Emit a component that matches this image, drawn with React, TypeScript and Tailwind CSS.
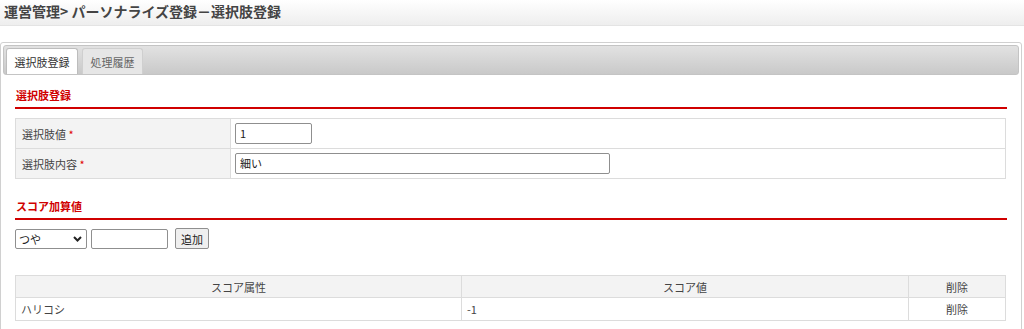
import React from "react";

const font = { fontFamily: '"Noto Sans CJK JP", "Noto Sans", sans-serif' };

function SectionTitle({ children }: { children: React.ReactNode }) {
  return (
    <div className="mx-[12px] h-[34px] border-b-2 border-[#d00000] pt-[12px] pl-[1px] text-[11px] leading-[16px]">
      <span className="font-bold text-[#d00000]">{children}</span>
    </div>
  );
}

export default function App() {
  const rows = [
    { label: "選択肢値", value: "1", w: "w-[77px]" },
    { label: "選択肢内容", value: "細い", w: "w-[375px]" },
  ];

  return (
    <div className="w-[1024px] h-[329px] overflow-hidden bg-white text-[#444]" style={font}>
      {/* Header */}
      <div className="h-[26px] border-b border-[#e4e4e4] bg-gradient-to-b from-white to-[#eeeeee] px-[4px] pt-[1px]">
        <h1 className="text-[14px] font-bold leading-[20px] text-[#444]">運営管理&gt; パーソナライズ登録－選択肢登録</h1>
      </div>

      {/* Panel */}
      <div className="mt-[16px] mr-[2px] rounded-t-[3px] border border-[#d0d0d0] p-[2px] pb-[20px] text-[11px] leading-[16px]">
        {/* Tabs */}
        <div className="flex h-[30px] items-end gap-[4px] rounded-[3px] border border-[#c4c4c4] bg-gradient-to-b from-[#e2e2e2] to-[#c9c9c9] pl-[2px]">
          <div className="flex h-[26px] w-[72px] items-center justify-center rounded-t-[3px] border border-b-0 border-[#bdbdbd] bg-white text-[#333]">
            選択肢登録
          </div>
          <div className="flex h-[26px] w-[61px] items-center justify-center rounded-t-[3px] border border-b-0 border-[#cfcfcf] bg-[#e6e6e6] text-[#666]">
            処理履歴
          </div>
        </div>

        <SectionTitle>選択肢登録</SectionTitle>

        <table className="mx-[12px] mt-[9px] w-[991px] border-collapse">
          <tbody>
            {rows.map((r) => (
              <tr key={r.label} className="h-[30px]">
                <td className="w-[215px] border border-[#dcdcdc] bg-[#f3f3f3] px-[6px]">
                  {r.label} <span className="text-[#e00000]">*</span>
                </td>
                <td className="border border-[#dcdcdc] px-[4px]">
                  <div className={`${r.w} h-[21px] rounded-[2px] border border-[#8f8f8f] bg-white px-[4px] leading-[19px] text-[#222]`}>
                    {r.value}
                  </div>
                </td>
              </tr>
            ))}
          </tbody>
        </table>

        <div className="mt-[7px]">
          <SectionTitle>スコア加算値</SectionTitle>
        </div>

        <div className="mx-[12px] mt-[8px] flex h-[21px] items-center gap-[4px]">
          <div className="flex h-[20px] w-[72px] items-center justify-between rounded-[2px] border border-[#8f8f8f] bg-white pl-[3px] pr-[4px] text-[#222]">
            <span>つや</span>
            <svg width="9" height="6" viewBox="0 0 9 6">
              <path d="M1 1l3.5 3.5L8 1" fill="none" stroke="#222" strokeWidth="2" />
            </svg>
          </div>
          <div className="h-[20px] w-[77px] rounded-[2px] border border-[#8f8f8f] bg-white" />
          <div className="ml-[3px] flex h-[21px] w-[34px] items-center justify-center rounded-[2px] border border-[#8f8f8f] bg-[#efefef] text-[#222]">
            追加
          </div>
        </div>

        <table className="mx-[12px] mt-[26px] w-[991px] border-collapse">
          <thead>
            <tr className="h-[22px] bg-[#f3f3f3]">
              <th className="w-[446px] border border-[#dcdcdc] font-normal">スコア属性</th>
              <th className="w-[447px] border border-[#dcdcdc] font-normal">スコア値</th>
              <th className="border border-[#dcdcdc] font-normal">削除</th>
            </tr>
          </thead>
          <tbody>
            <tr className="h-[23px]">
              <td className="border border-[#dcdcdc] px-[5px]">ハリコシ</td>
              <td className="border border-[#dcdcdc] px-[5px]">-1</td>
              <td className="border border-[#dcdcdc] text-center">削除</td>
            </tr>
          </tbody>
        </table>
      </div>
    </div>
  );
}
